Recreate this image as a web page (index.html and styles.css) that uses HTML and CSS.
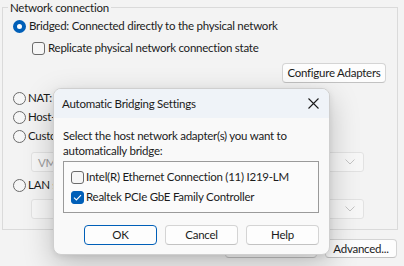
FILE: index.html
```html
<!DOCTYPE html>
<html>
<head>
<meta charset="utf-8">
<link rel="stylesheet" href="styles.css">
</head>
<body>
<div class="page">
  <fieldset class="group">
    <legend class="legend">Network connection</legend>
    <div class="row r-bridged">
      <span class="radio checked"></span>
      <span class="lbl">Bridged: Connected directly to the physical network</span>
    </div>
    <div class="row r-replicate">
      <span class="check"></span>
      <span class="lbl">Replicate physical network connection state</span>
    </div>
    <div class="row r-config">
      <button class="btn cfg">Configure Adapters</button>
    </div>
    <div class="row r-nat">
      <span class="radio"></span>
      <span class="lbl">NAT: Used to share the host's IP address</span>
    </div>
    <div class="row r-host">
      <span class="radio"></span>
      <span class="lbl">Host-only: A private network shared with the host</span>
    </div>
    <div class="row r-custom">
      <span class="radio"></span>
      <span class="lbl">Custom: Specific virtual network</span>
    </div>
    <div class="select s1">
      <span class="sel-text">VMnet0</span>
      <svg class="chev" width="10" height="6" viewBox="0 0 10 6"><path d="M0.5 0.5 L5 5 L9.5 0.5" fill="none" stroke="#c4c4c4" stroke-width="1"/></svg>
    </div>
    <div class="row r-lan">
      <span class="radio"></span>
      <span class="lbl">LAN segment:</span>
    </div>
    <div class="select s2">
      <span class="sel-text"></span>
      <svg class="chev" width="10" height="6" viewBox="0 0 10 6"><path d="M0.5 0.5 L5 5 L9.5 0.5" fill="none" stroke="#c4c4c4" stroke-width="1"/></svg>
    </div>
  </fieldset>
  <div class="bottom">
    <button class="btn bb">LAN Segments...</button>
    <button class="btn bb adv">Advanced...</button>
  </div>

  <div class="dialog">
    <div class="titlebar">
      <span class="title">Automatic Bridging Settings</span>
      <svg class="close" width="11" height="11" viewBox="0 0 11 11"><path d="M0.5 0.5 L10.5 10.5 M10.5 0.5 L0.5 10.5" stroke="#1b1b1b" stroke-width="1.1" fill="none"/></svg>
    </div>
    <div class="dbody">
      <p class="prompt">Select the host network adapter(s) you want to automatically bridge:</p>
      <div class="list">
        <div class="item"><span class="check"></span><span class="lbl">Intel(R) Ethernet Connection (11) I219-LM</span></div>
        <div class="item"><span class="check on"><svg width="9" height="7" viewBox="0 0 9 7"><path d="M1 3.6 L3.4 6 L8 1.2" fill="none" stroke="#fff" stroke-width="1.1"/></svg></span><span class="lbl">Realtek PCIe GbE Family Controller</span></div>
      </div>
      <div class="actions">
        <button class="btn dbtn primary">OK</button>
        <button class="btn dbtn">Cancel</button>
        <button class="btn dbtn">Help</button>
      </div>
    </div>
  </div>
</div>
</body>
</html>
```
FILE: styles.css
```css
* { box-sizing: border-box; }
html, body { margin: 0; padding: 0; }
body {
  width: 404px;
  height: 266px;
  overflow: hidden;
  background: #f3f3f3;
  font-family: "Lato", "Liberation Sans", sans-serif;
  font-size: 11.5px;
  letter-spacing: -0.25px;
  color: #1b1b1b;
}
.page {
  position: relative;
  width: 404px;
  height: 266px;
}
.group {
  margin: 0 0 0 2px;
  width: 396px;
  height: 230px;
  padding: 3px 0 0 0;
  border: 1px solid #dadada;
  display: flex;
  flex-direction: column;
  align-items: flex-start;
}
.legend {
  margin-left: 5px;
  padding: 0 2px;
  line-height: 15px;
}
.row {
  display: flex;
  align-items: center;
  height: 16px;
  white-space: nowrap;
}
.lbl { line-height: 16px; }
.r-bridged { margin-left: 10px; }
.r-bridged .lbl { margin-left: 3px; }
.r-replicate { margin-left: 29px; margin-top: 6px; }
.r-replicate .lbl { margin-left: 3px; }
.r-config { align-self: flex-end; margin-right: 11px; margin-top: 7px; height: 20px; }
.r-nat { margin-left: 10px; margin-top: 7px; }
.r-host { margin-left: 10px; margin-top: 3px; }
.r-custom { margin-left: 10px; margin-top: 3px; }
.r-lan { margin-left: 10px; margin-top: 5px; }
.r-nat .lbl, .r-host .lbl, .r-custom .lbl, .r-lan .lbl { margin-left: 2px; }

.radio {
  width: 13px;
  height: 13px;
  border-radius: 50%;
  border: 1px solid #6b6b6b;
  background: #f6f6f6;
  flex: none;
  display: inline-block;
}
.radio.checked {
  border: 4px solid #005fb8;
  background: #ffffff;
}
.check {
  width: 13px;
  height: 13px;
  border-radius: 3px;
  border: 1px solid #6b6b6b;
  background: #f6f6f6;
  flex: none;
  display: inline-flex;
  align-items: center;
  justify-content: center;
}
.check.on {
  background: #005fb8;
  border-color: #005fb8;
}

.btn {
  font-family: inherit;
  font-size: 11.5px;
  letter-spacing: -0.25px;
  color: #1b1b1b;
  background: #fdfdfd;
  border: 1px solid #d4d4d4;
  border-bottom-color: #c2c2c2;
  border-radius: 4px;
  padding: 0;
  height: 20px;
  line-height: 18px;
}
.cfg { width: 104px; }

.select {
  margin-left: 28px;
  width: 333px;
  height: 20px;
  border: 1px solid #e2e2e2;
  border-radius: 3px;
  background: #f7f7f7;
  display: flex;
  align-items: center;
  justify-content: space-between;
  padding: 0 8px 0 6px;
  color: #9d9d9d;
}
.s1 { margin-top: 8px; }
.s2 { margin-top: 6px; }
.chev { flex: none; }

.bottom {
  display: flex;
  justify-content: flex-end;
  gap: 8px;
  margin-top: 9px;
  padding-right: 7px;
}
.bb { width: 92px; height: 19px; line-height: 17px; }
.adv { width: 72px; }

.dialog {
  position: absolute;
  left: 53px;
  top: 88px;
  width: 277px;
  height: 167px;
  border: 1px solid #cfcfcf;
  border-radius: 8px;
  background: #f9f9f9;
  box-shadow: 0 10px 30px rgba(0,0,0,0.22), 0 2px 6px rgba(0,0,0,0.08);
  overflow: hidden;
  display: flex;
  flex-direction: column;
}
.titlebar {
  height: 29px;
  background: #eff3f8;
  display: flex;
  align-items: center;
  justify-content: space-between;
  padding: 0 10px 0 8px;
  flex: none;
}
.title { line-height: 16px; }
.close { flex: none; }
.dbody {
  padding: 10px 10px 0 9px;
  display: flex;
  flex-direction: column;
}
.prompt {
  margin: 0;
  line-height: 15px;
}
.list {
  margin-top: 3px;
  height: 52px;
  border: 1px solid #9a9a9a;
  background: #fbfbfb;
  padding: 5px 0 0 7px;
}
.item {
  display: flex;
  align-items: center;
  height: 20px;
  white-space: nowrap;
}
.item .lbl { margin-left: 2px; }
.actions {
  margin-top: 12px;
  display: flex;
  justify-content: flex-end;
  gap: 8px;
}
.dbtn { width: 73px; }
.primary { border: 1px solid #005fb8; }
```
